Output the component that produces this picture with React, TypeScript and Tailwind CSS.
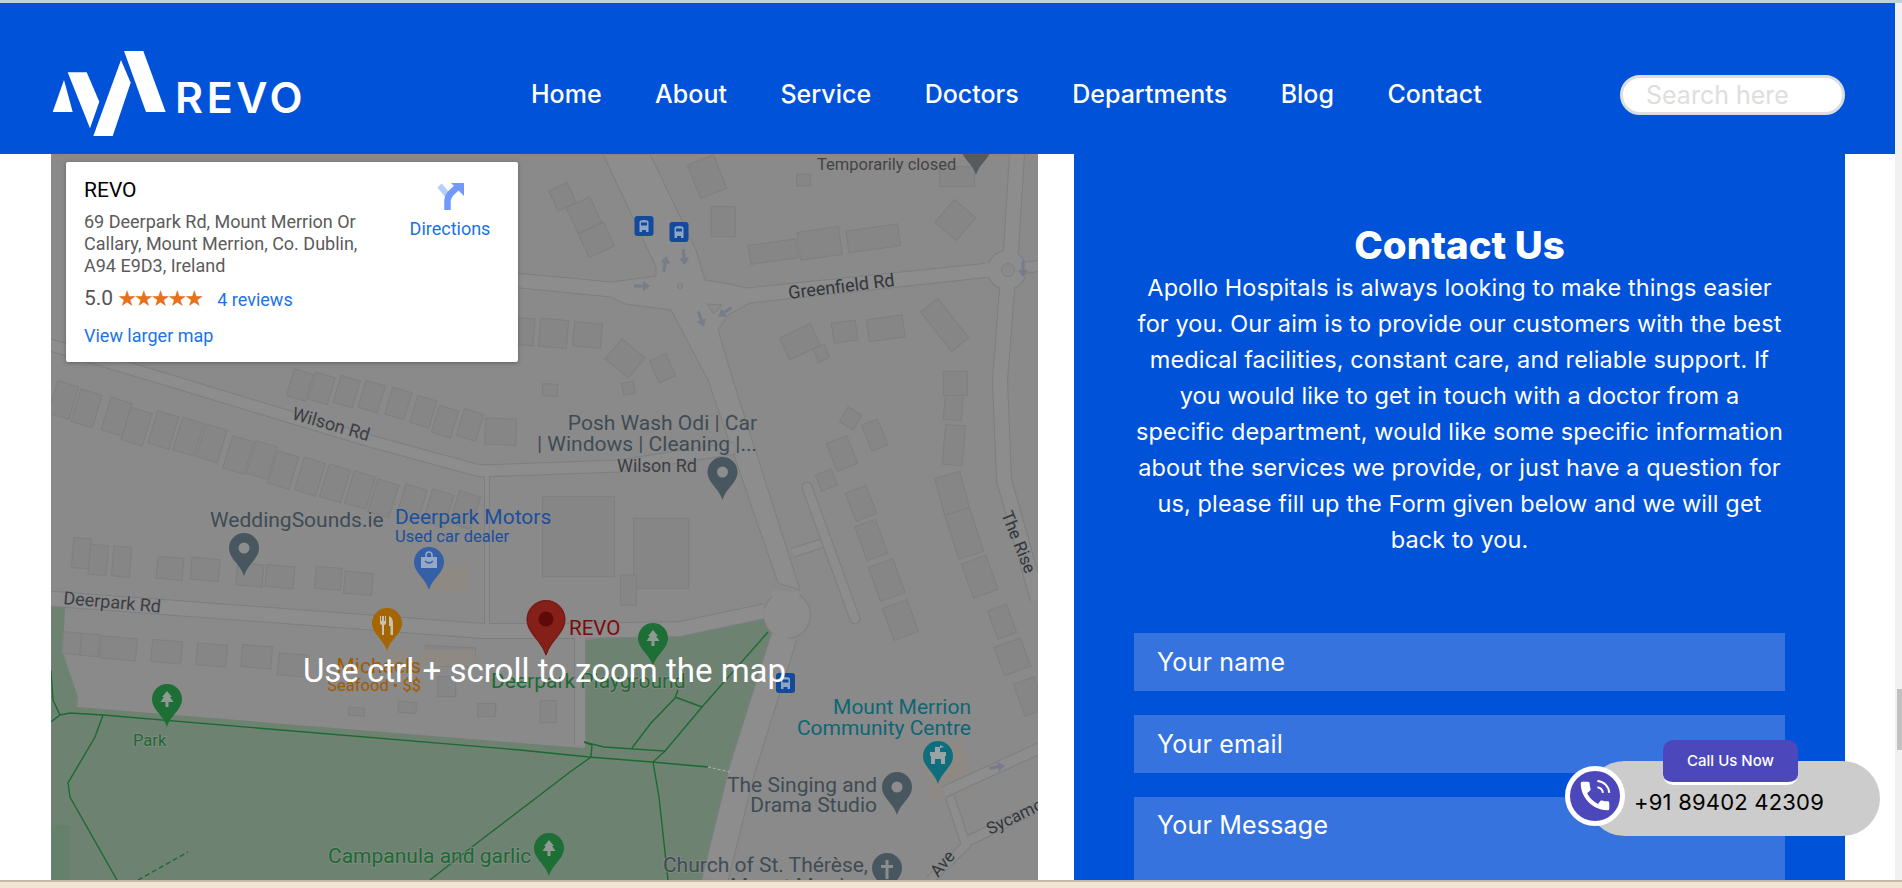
import React from "react";

type B = [number, number, number, number, number];
const z4 = (x: number, y: number): [number, number] => [50 + x / 3, 380 + y / 3];
const z5 = (x: number, y: number): [number, number] => [520 + x / 2.904, 380 + y / 3];
const z6 = (x: number, y: number): [number, number] => [500 + x / 2.8, 150 + y / 3];

const buildings: B[] = [
  ...([[40,60],[110,85],[200,110],[260,140],[340,150],[415,170],[485,190],[565,225],[635,240],[700,270],[780,290],[855,310],[930,330],[1000,355],[1085,370],[1165,385],[1245,390]] as number[][]).map(([x, y]) => [...z4(x, y), 22, 34, 17] as B),
  ...([[750,15],[815,25],[890,35],[965,50],[1045,70],[1120,95],[1185,125],[1260,135]] as number[][]).map(([x, y]) => [...z4(x, y), 20, 28, 17] as B),
  [...z4(1352, 155), 31, 26, 2],
  ...([[95,520],[145,540],[215,545],[360,565],[465,568],[600,585],[690,590],[835,595],[925,610]] as number[][]).map(([x, y], i) => [...z4(x, y), i < 3 ? 18 : i % 2 ? 26 : 28, i < 3 ? 30 : 22, 5] as B),
  ...([[65,790],[120,795],[205,805],[350,815],[485,825],[620,830],[730,855]] as number[][]).map(([x, y], i) => [...z4(x, y), i < 2 ? 18 : i === 2 ? 36 : 30, 22, 5] as B),
  [...z4(1200, 830), 50, 20, 3],
  [...z4(920, 995), 16, 8, 5],
  [...z4(1072, 982), 18, 11, 5],
  [...z4(1310, 990), 18, 13, 0],
  [...z4(1495, 995), 16, 22, 0],
  [...z4(1190, 920), 18, 20, 0],
  [...z5(170, 470), 72, 80, 0],
  [...z5(410, 520), 55, 70, 0],
  [...z5(315, 630), 16, 30, 0],
  [...z5(960, 115), 16, 17, 30],
  [...z5(1030, 165), 17, 28, -22],
  [...z5(935, 220), 22, 30, -22],
  [...z5(890, 300), 17, 17, -22],
  [...z5(990, 370), 22, 30, -22],
  [...z5(1020, 480), 22, 36, -20],
  [...z5(1065, 600), 26, 36, -20],
  [...z5(1105, 720), 26, 34, -20],
  [...z5(1260, 60), 18, 40, 5],
  [...z5(1260, 195), 20, 40, 5],
  [...z5(1255, 340), 26, 38, -15],
  [...z5(1290, 460), 26, 46, -18],
  [...z5(1335, 590), 26, 36, -20],
  [...z5(1400, 725), 20, 30, -20],
  [...z5(1430, 830), 28, 30, -20],
  [...z5(1480, 950), 22, 34, -20],
  [...z6(580, 80), 28, 36, -22],
  [...z6(625, 215), 24, 30, 0],
  [...z6(270, 270), 28, 26, -25],
  [...z6(235, 195), 26, 28, -25],
  [...z6(175, 140), 20, 22, -25],
  [...z6(765, 305), 48, 19, -8],
  [...z6(895, 280), 42, 28, -8],
  [...z6(1045, 265), 52, 22, -8],
  [...z6(1275, 210), 28, 30, 40],
  [...z6(1245, 525), 22, 50, -38],
  [...z6(840, 575), 34, 24, -25],
  [...z6(965, 545), 24, 20, -8],
  [...z6(1080, 535), 36, 22, -8],
  [...z6(900, 610), 12, 14, -25],
  [...z6(455, 655), 18, 24, -25],
  [...z6(350, 625), 30, 26, 40],
  [...z6(140, 720), 15, 12, 3],
  [...z6(360, 715), 12, 12, -10],
  [...z6(1275, 700), 24, 24, 0],
  [...z6(70, 545), 18, 27, 5],
  [...z6(150, 550), 28, 28, 5],
  [...z6(245, 555), 28, 24, 5],
  [...z6(850, 90), 14, 12, 0],
  [...z6(1280, 80), 35, 20, 0],
];

const roads: { d: string; w: number }[] = [
  { d: "M784 637 L742 770 L715 880", w: 25 },
  { d: "M1017 154 L1011 250 L1007 290 L1000 380 L1004 480 L1038 600", w: 14 },
  { d: "M1007 270 L1038 266", w: 10 },
  { d: "M40 342 L168 380 L290 417 L370 441 L480 471 L620 466 L735 448", w: 11 },
  { d: "M40 598 L163 607 L483 631 L575 631 L680 629 L765 611", w: 14 },
  { d: "M487 476 L487 628", w: 4 },
  { d: "M580 636 L580 745", w: 10 },
  { d: "M944 792 L1040 748", w: 10 },
  { d: "M950 797 L966 845 L930 880", w: 8 },
  { d: "M966 842 L1040 806", w: 9 },
  { d: "M792 553 L826 542", w: 8 },
];

const junction = "603,154 656,267 656,276 611,282 560,277 500,272 500,286 611,297 625,304 671,310 708,380 778,583 800,590 733,380 718,330 728,315 750,303 991,277 989,263 746,288 730,284 705,280 696,250 650,154";

const greenPaths = [
  "M51 722 L60 715 L70 713 L103 715 L520 750 L589 757 L652 762 L708 767",
  "M103 715 L95 737 L68 783 L70 797 L117 880",
  "M51 670 L53 700 L60 715",
  "M430 880 L477 843 L570 772 L591 757 L592 745 L584 742",
  "M584 742 L604 747 L665 751 L653 762 L659 797 L668 880",
  "M665 751 L702 707 L768 632",
  "M632 748 L651 723 L675 698 L678 690",
  "M675 697 L702 707",
];

const Pin = ({ cx, top, color, w = 30, h = 43, children }: { cx: number; top: number; color: string; w?: number; h?: number; children?: React.ReactNode }) => {
  const r = w / 2;
  return (
    <g transform={`translate(${cx} ${top})`}>
      <path d={`M0 ${h} C${-r * 0.25} ${h * 0.72} ${-r} ${h * 0.6} ${-r} ${r} A${r} ${r} 0 0 1 ${r} ${r} C${r} ${h * 0.6} ${r * 0.25} ${h * 0.72} 0 ${h} Z`} fill={color} />
      {children}
    </g>
  );
};
const Tree = () => <path d="M0 7 L5 13 H3 L6.5 18 H1.5 V23 H-1.5 V18 H-6.5 L-3 13 H-5 Z" fill="#8f9a92" />;
const Dot = () => <circle cx="0" cy="15" r="5.5" fill="#8d8d8d" />;
const Bus = ({ x, y }: { x: number; y: number }) => (
  <g transform={`translate(${x - 9.5} ${y - 10})`}>
    <rect width="19" height="20" rx="3" fill="#134a9b" />
    <path d="M5 6 Q5 4 9.5 4 Q14 4 14 6 V14 H5 Z" fill="#8da6c8" />
    <rect x="6.5" y="6.5" width="6" height="3" fill="#134a9b" />
    <rect x="5" y="14" width="2.5" height="2" fill="#8da6c8" />
    <rect x="11.5" y="14" width="2.5" height="2" fill="#8da6c8" />
  </g>
);
const Arrow = ({ x, y, a }: { x: number; y: number; a: number }) => (
  <path transform={`translate(${x} ${y}) rotate(${a})`} d="M-8 -1.5 H1 V-5 L8 0 L1 5 V1.5 H-8 Z" fill="#777c8a" />
);

const T = ({ x, y, c, s, a = "start", r, w, children }: { x: number; y: number; c: string; s: number; a?: "start" | "middle" | "end"; r?: number; w?: number; children: React.ReactNode }) => (
  <text x={x} y={y} fill={c} fontSize={s} textAnchor={a} fontWeight={w} transform={r ? `rotate(${r} ${x} ${y})` : undefined} stroke="#8a8a8a" strokeOpacity="0.7" strokeWidth="2" paintOrder="stroke" fontFamily="Roboto, sans-serif">
    {children}
  </text>
);

const GRAY = "#3f4c55";
const GREEN = "#1c6a31";

const MapDrawing = () => (
  <svg viewBox="51 154 987 726" className="absolute inset-0 w-full h-full">
    <rect x="51" y="154" width="987" height="726" fill="#8a8a8a" />
    <polygon points="51,607 65,607 63,653 78,697 77,707 520,743 585,748 585,640 764,618 773,637 730,770 702,880 51,880" fill="#6e8272" />
    <rect x="51" y="825" width="19" height="55" fill="#65806b" />
    {buildings.map(([x, y, w, h, a], i) => (
      <rect key={i} x={x - w / 2} y={y - h / 2} width={w} height={h} transform={`rotate(${a} ${x} ${y})`} fill="#868686" stroke="#7f7f7f" strokeWidth="1" />
    ))}
    <rect x="386" y="650" width="22" height="14" fill="#8e8a83" />
    <rect x="420" y="650" width="55" height="16" fill="#8e8a83" />
    <rect x="420" y="566" width="48" height="25" fill="#8e8a83" />
    <rect x="925" y="745" width="45" height="50" fill="#8e8a83" transform="rotate(-15 947 770)" />
    <polygon points={junction} fill="#8d8d8d" stroke="#7c7e81" strokeWidth="1" strokeLinejoin="round" />
    {roads.map((r, i) => (
      <path key={`a${i}`} d={r.d} fill="none" stroke="#7c7e81" strokeWidth={r.w + 2} strokeLinejoin="round" />
    ))}
    <circle cx="787" cy="615" r="24" fill="#7c7e81" />
    <circle cx="1007" cy="270" r="20" fill="#7c7e81" />
    {roads.map((r, i) => (
      <path key={`b${i}`} d={r.d} fill="none" stroke="#8d8d8d" strokeWidth={r.w} strokeLinejoin="round" />
    ))}
    <circle cx="787" cy="615" r="23" fill="#8d8d8d" />
    <path d="M772 590 L800 592 L795 612 L772 612 Z" fill="#8d8d8d" />
    <circle cx="1007" cy="270" r="19" fill="#8d8d8d" />
    <path d="M985 263 L1000 262 L1000 277 L985 277 Z" fill="#8d8d8d" />
    <circle cx="1008" cy="270" r="6.5" fill="#8a8a8a" stroke="#7c7e81" />
    <circle cx="680" cy="286" r="2.5" fill="#8a8a8a" stroke="#7c7e81" />
    <polygon points="707,304 722,305 714,314" fill="#8a8a8a" stroke="#7c7e81" />
    <rect x="826" y="478" width="10" height="150" rx="5" transform="rotate(-20 831 553)" fill="#8d8d8d" stroke="#7c7e81" />
    {greenPaths.map((d, i) => (
      <path key={i} d={d} fill="none" stroke={GREEN} strokeWidth="1.4" />
    ))}
    <path d="M138 880 L188 852" fill="none" stroke={GREEN} strokeWidth="1.4" strokeDasharray="5 3" />
    <path d="M708 767 L730 772" fill="none" stroke="#a8a8a8" strokeWidth="1.2" strokeDasharray="3 2" />

    <Arrow x={642} y={286} a={0} />
    <Arrow x={665} y={264} a={-80} />
    <Arrow x={684} y={257} a={85} />
    <Arrow x={701} y={319} a={70} />
    <Arrow x={725} y={312} a={145} />
    <Arrow x={1023} y={269} a={90} />
    <Arrow x={997} y={767} a={-10} />
    <Bus x={644} y={226} />
    <Bus x={679} y={232} />
    <Bus x={785.5} y={683} />

    <Pin cx={976} top={132} color="#565b5f" />
    <Pin cx={244} top={533} color="#47565f"><Dot /></Pin>
    <Pin cx={722.5} top={457} color="#47565f"><Dot /></Pin>
    <Pin cx={897} top={772} color="#47565f"><Dot /></Pin>
    <Pin cx={887} top={853} color="#47565f">
      <path d="M-1.5 7 H1.5 V12 H6 V15 H1.5 V26 H-1.5 V15 H-6 V12 H-1.5 Z" fill="#8d8d8d" />
    </Pin>
    <Pin cx={429} top={547} color="#3460a8">
      <path d="M-8 10 H8 V21 H-8 Z" fill="#96a8c6" />
      <path d="M-3 10 V8 A3 3 0 0 1 3 8 V10" fill="none" stroke="#96a8c6" strokeWidth="1.6" />
      <path d="M-4 14 Q0 18 4 14" fill="none" stroke="#3460a8" strokeWidth="1.5" />
    </Pin>
    <Pin cx={387} top={608} color="#a56500">
      <path d="M-7 8 V15 Q-7 17 -5 17 V27 H-3 V17 Q-1 17 -1 15 V8 H-2 V13 H-3 V8 H-5 V13 H-6 V8 Z M2 8 Q6 9 6 16 V27 H3.5 V18 H2 Z" fill="#c9c2b2" />
    </Pin>
    <Pin cx={167} top={684} color="#1d6f36"><Tree /></Pin>
    <Pin cx={549} top={833} color="#1d6f36"><Tree /></Pin>
    <Pin cx={653} top={623} color="#1d6f36"><Tree /></Pin>
    <Pin cx={938} top={741} color="#0f6e7e">
      <path d="M-7 23 V15 H-8 V11 H-3 V6 H2 V4 L6 6 L2 7 V11 H8 V15 H7 V23 H3 V18 H-3 V23 Z" fill="#9aa4a4" />
    </Pin>
    <Pin cx={546} top={600} color="#842019" w={39} h={56}>
      <path d="M0 0.8 A18.7 18.7 0 0 1 18.7 19.5 C18.7 31 6 38 0 55" fill="none" stroke="#6f1a14" />
      <path d="M0 0.8 A18.7 18.7 0 0 0 -18.7 19.5 C-18.7 31 -6 38 0 55" fill="none" stroke="#6f1a14" />
      <circle cx="0" cy="19" r="7.5" fill="#5f0a08" />
    </Pin>

    <T x={817} y={170} c="#444" s={16.5}>Temporarily closed</T>
    <T x={789} y={299} c="#33363a" s={18} r={-7}>Greenfield Rd</T>
    <T x={291} y={419} c="#3b3e44" s={18} r={16}>Wilson Rd</T>
    <T x={757} y={430} c={GRAY} s={21} a="end">Posh Wash Odi | Car</T>
    <T x={757} y={451} c={GRAY} s={21} a="end">| Windows | Cleaning |...</T>
    <T x={617} y={472} c="#3b3e44" s={18}>Wilson Rd</T>
    <T x={210} y={527} c={GRAY} s={21}>WeddingSounds.ie</T>
    <T x={395} y={524} c="#1c4f9c" s={21}>Deerpark Motors</T>
    <T x={395} y={542} c="#1c4f9c" s={16.5}>Used car dealer</T>
    <T x={63} y={604} c="#3b3e44" s={18} r={5}>Deerpark Rd</T>
    <T x={569} y={635} c="#7a0c0c" s={20.5}>REVO</T>
    <T x={421} y={673} c="#a05a00" s={21} a="end">Michaels</T>
    <T x={421} y={691} c="#a05a00" s={16.5} a="end">Seafood • $$</T>
    <T x={491} y={688} c={GREEN} s={21}>Deerpark Playground</T>
    <T x={133} y={746} c={GREEN} s={16.5}>Park</T>
    <T x={328} y={863} c={GREEN} s={21}>Campanula and garlic</T>
    <T x={971} y={714} c="#0e6675" s={21} a="end">Mount Merrion</T>
    <T x={971} y={735} c="#0e6675" s={21} a="end">Community Centre</T>
    <T x={877} y={792} c={GRAY} s={21} a="end">The Singing and</T>
    <T x={877} y={812} c={GRAY} s={21} a="end">Drama Studio</T>
    <T x={868} y={872} c={GRAY} s={21} a="end">Church of St. Thérèse,</T>
    <T x={868} y={893} c={GRAY} s={21} a="end">Mount Merrion</T>
    <T x={1001} y={514} c="#33363a" s={17} r={68}>The Rise</T>
    <T x={990} y={835} c="#33363a" s={17} r={-26}>Sycamore</T>
    <T x={938} y={878} c="#33363a" s={17} r={-50}>Ave</T>
  </svg>
);

const InfoCard = () => (
  <div className="absolute left-[15px] top-[8px] w-[452px] h-[200px] bg-white rounded-[2px] shadow-[0_1px_4px_rgba(0,0,0,0.3)] pl-[18px] pt-[14px] font-['Roboto'] flex">
    <div className="w-[300px]">
      <div className="text-[21px] leading-[28px] text-black">REVO</div>
      <div className="text-[18px] leading-[22px] text-[#5b5b5b] whitespace-nowrap mt-[7px]">
        69 Deerpark Rd, Mount Merrion Or<br />Callary, Mount Merrion, Co. Dublin,<br />A94 E9D3, Ireland
      </div>
      <div className="flex items-center mt-[8px] h-[28px] whitespace-nowrap">
        <span className="text-[21px] text-[#555]">5.0</span>
        <span className="text-[22px] text-[#e7711b] ml-[4px] leading-none tracking-[-2.9px] font-['DejaVu_Sans']">★★★★★</span>
        <span className="text-[18px] text-[#1a73e8] ml-[16px]">4 reviews</span>
      </div>
      <div className="text-[18px] text-[#1a73e8] mt-[12px] leading-[22px]">View larger map</div>
    </div>
    <div className="flex flex-col items-center w-[100px] ml-[16px] mt-[7px]">
      <svg width="27" height="27" viewBox="436 183 27 27">
        <path d="M438.5 185.5 L449 198" stroke="#b8cdfb" strokeWidth="6" fill="none" />
        <path d="M446.5 210 V201 Q446.5 197 450 193 L456 187.5" stroke="#7299f9" strokeWidth="6.5" fill="none" />
        <path d="M463 183 V196 L450 183 Z" fill="#7299f9" />
      </svg>
      <span className="text-[18px] text-[#1a73e8] mt-[8px] leading-[22px]">Directions</span>
    </div>
  </div>
);

const navItems = ["Home", "About", "Service", "Doctors", "Departments", "Blog", "Contact"];

const Header = () => (
  <header className="h-[151px] shrink-0 bg-[#0052d9] flex items-center pt-[33px] font-['Inter']">
    <div className="w-[531px] shrink-0 pl-[52px] flex items-center">
      <svg width="114" height="85" viewBox="52 51 114 85" className="shrink-0 -mt-[3px]">
        <polygon points="52.7,112 64,80 72.7,112" fill="#fff" />
        <polygon points="67.7,72.3 86.7,72.3 99.3,101.7 90,128.3" fill="#fff" />
        <polygon points="93.3,136 121,60 130.7,82.7 112.7,136" fill="#fff" />
        <polygon points="124,51 143.3,51 165.7,112 146,112" fill="#fff" />
      </svg>
      <span className="ml-[9px] text-[43px] leading-none font-semibold text-white tracking-[3.6px] mt-[4px]">REVO</span>
    </div>
    <nav className="flex gap-[53.5px] text-[25px] font-medium text-white whitespace-nowrap">
      {navItems.map((n) => (
        <a key={n} href="#">{n}</a>
      ))}
    </nav>
    <input
      placeholder="Search here"
      className="ml-auto mr-[50px] w-[225px] h-[40px] rounded-full bg-white border-[3px] border-[#dddddd] pl-[23px] text-[25px] outline-none placeholder:text-[#e0dedc]"
    />
  </header>
);

const ContactPanel = () => (
  <section className="w-[771px] shrink-0 bg-[#0052d9] pt-[69px] text-white font-['Inter'] overflow-hidden">
    <div className="text-center">
      <h2 className="text-[38.5px] leading-[44px] font-extrabold">Contact Us</h2>
      <p className="text-[23.5px] leading-[36px] tracking-[0.1px] mt-[3px] whitespace-nowrap">
        Apollo Hospitals is always looking to make things easier<br />
        for you. Our aim is to provide our customers with the best<br />
        medical facilities, constant care, and reliable support. If<br />
        you would like to get in touch with a doctor from a<br />
        specific department, would like some specific information<br />
        about the services we provide, or just have a question for<br />
        us, please fill up the Form given below and we will get<br />
        back to you.
      </p>
    </div>
    <form className="mx-[60px] mt-[75px] flex flex-col gap-[24px]">
      <input placeholder="Your name" className="h-[58px] bg-[#3673de] pl-[23px] text-[25px] tracking-[0.2px] outline-none placeholder:text-white" />
      <input placeholder="Your email" className="h-[58px] bg-[#3673de] pl-[23px] text-[25px] tracking-[0.2px] outline-none placeholder:text-white" />
      <textarea placeholder="Your Message" className="h-[150px] shrink-0 bg-[#3673de] pl-[23px] pt-[10px] text-[25px] tracking-[0.2px] outline-none resize-none placeholder:text-white" />
    </form>
  </section>
);

const CallWidget = () => (
  <div className="absolute left-[1565px] top-[740px] w-[315px] h-[96px] font-['Inter']">
    <div className="absolute left-[22px] top-[21px] w-[293px] h-[75px] rounded-full bg-[#cccccc] pl-[47px] pt-[26px] text-[22px] tracking-[0.2px] leading-[30px] text-black whitespace-nowrap">
      +91 89402 42309
    </div>
    <div className="absolute left-0 top-[26px] w-[60px] h-[60px] rounded-full bg-[#4c48bb] border-[5px] border-white flex items-center justify-center">
      <svg width="38" height="38" viewBox="0 0 24 24" fill="#fff">
        <path d="M20.01 15.38c-1.23 0-2.42-.2-3.53-.56-.35-.12-.74-.03-1.01.24l-1.57 1.97c-2.83-1.35-5.48-3.9-6.89-6.83l1.95-1.66c.27-.28.35-.67.24-1.02-.37-1.11-.56-2.3-.56-3.53 0-.54-.45-.99-.99-.99H4.19C3.65 3 3 3.24 3 3.99 3 13.28 10.73 21 20.01 21c.71 0 .99-.63.99-1.18v-3.45c0-.54-.45-.99-.99-.99z" />
        <path d="M13.5 2.5A8 8 0 0 1 21 10M13.5 6.5A4 4 0 0 1 17 10" fill="none" stroke="#fff" strokeWidth="1.3" />
      </svg>
    </div>
    <div className="absolute left-[98px] top-0 w-[135px] h-[45px] rounded-[10px] bg-[#4c48bb] border-b-[3px] border-white flex items-center justify-center text-[15px] font-medium text-white">
      Call Us Now
    </div>
  </div>
);

export default function App() {
  return (
    <div className="relative w-[1902px] h-[888px] overflow-hidden flex flex-col bg-white">
      <div className="h-[3px] shrink-0 bg-[#bcd6d4]" />
      <div className="flex flex-1 min-h-0">
        <div className="w-[1895px] shrink-0 flex flex-col">
          <Header />
          <main className="flex-1 min-h-0 flex gap-[36px] pl-[51px] pr-[50px] overflow-hidden">
            <div className="relative w-[987px] shrink-0 overflow-hidden">
              <MapDrawing />
              <InfoCard />
              <div className="absolute left-0 right-0 top-[497px] text-center text-[33px] leading-[40px] text-white font-['Roboto']">
                Use ctrl + scroll to zoom the map
              </div>
            </div>
            <ContactPanel />
          </main>
        </div>
        <div className="flex-1 bg-[#f1f1f1] flex flex-col pl-[2px]">
          <div className="h-[686px] shrink-0" />
          <div className="h-[61px] shrink-0 bg-[#c1c1c1]" />
        </div>
      </div>
      <div className="h-[8px] shrink-0 bg-[#f3e5d3] border-t-[2px] border-[#c5b8a5]" />
      <CallWidget />
    </div>
  );
}
